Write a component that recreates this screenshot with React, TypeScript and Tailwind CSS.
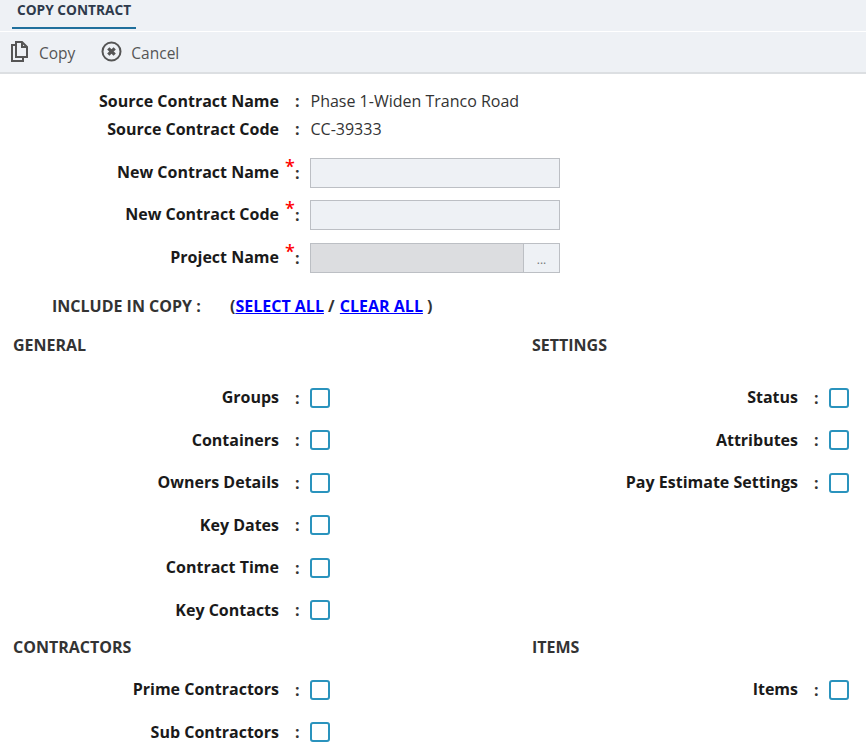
import React from "react";

const Colon = () => <span className="w-[31px] pl-[16px] font-bold text-[#333]">:</span>;

const Req = () => (
  <span className="w-[31px] relative font-bold text-[#333]">
    <span className="absolute left-[6px] -top-[6px] text-[#f00] text-[18px] leading-[20px] font-semibold">*</span>
    <span className="pl-[16px]">:</span>
  </span>
);

const CheckRow = ({ label }: { label: string }) => (
  <div className="flex items-center h-[42.5px]">
    <span className="w-[279px] -mt-[1.5px] text-right font-bold text-[#1a1a1a]">{label}</span>
    <Colon />
    <span className="w-5 h-5 border-2 border-[#2a93bd] rounded-[3px] bg-white" />
  </div>
);

const Section = ({ title }: { title: string }) => (
  <div className="pl-[13px] font-bold text-[#333] uppercase h-[20px] leading-[20px]">{title}</div>
);

export default function App() {
  const general = ["Groups", "Containers", "Owners Details", "Key Dates", "Contract Time", "Key Contacts"];
  const settings = ["Status", "Attributes", "Pay Estimate Settings"];

  return (
    <div className="w-[866px] h-[751px] overflow-hidden bg-white text-[16px] leading-[22px]" style={{ fontFamily: '"Open Sans", sans-serif' }}>
      <div className="h-[32px] bg-[#eef1f5] border-b border-white">
        <div className="inline-block align-top ml-[12px] pl-[5px] w-[124px] h-[29px] pt-[2px] border-b-2 border-[#1f6f9c] text-[13.7px] leading-[16px] font-bold text-[#2e3a4c] whitespace-nowrap">
          COPY CONTRACT
        </div>
      </div>
      <div className="h-[42px] bg-[#eef1f5] border-b-2 border-[#dcdfe2] flex items-center text-[#555] text-[15.5px]">
        <svg className="ml-[11px] -mt-[1px]" width="17" height="21" viewBox="0 0 17 21" fill="none" stroke="#555" strokeWidth="2">
          <path d="M5 1h6l5 5v10H5z" />
          <path d="M11 1v5h5" />
          <path d="M5 4H1v16h11v-4" />
        </svg>
        <span className="ml-[11px] mt-[2px]">Copy</span>
        <svg className="ml-[26px] -mt-[1px]" width="21" height="21" viewBox="0 0 21 21" fill="none">
          <circle cx="10.5" cy="10.5" r="9" stroke="#555" strokeWidth="2" />
          <path d="M7.3 7.3l6.4 6.4M13.7 7.3l-6.4 6.4" stroke="#555" strokeWidth="3.2" />
        </svg>
        <span className="ml-[9px] mt-[2px]">Cancel</span>
      </div>

      <div className="flex items-center h-[28px] mt-[13px]">
        <span className="w-[279px] text-right font-bold text-[#1a1a1a]">Source Contract Name</span>
        <Colon />
        <span className="ml-[0.5px] text-[#333]">Phase 1-Widen Tranco Road</span>
      </div>
      <div className="flex items-center h-[28px]">
        <span className="w-[279px] text-right font-bold text-[#1a1a1a]">Source Contract Code</span>
        <Colon />
        <span className="ml-[0.5px] text-[#333]">CC-39333</span>
      </div>

      <div className="flex items-center h-[30px] mt-[15px]">
        <span className="w-[279px] -mt-[2px] text-right font-bold text-[#1a1a1a]">New Contract Name</span>
        <Req />
        <div className="w-[250px] h-[30px] bg-[#eef1f5] border border-[#bcbfc4]" />
      </div>
      <div className="flex items-center h-[30px] mt-[12px]">
        <span className="w-[279px] -mt-[2px] text-right font-bold text-[#1a1a1a]">New Contract Code</span>
        <Req />
        <div className="w-[250px] h-[30px] bg-[#eef1f5] border border-[#bcbfc4]" />
      </div>
      <div className="flex items-center h-[30px] mt-[13px]">
        <span className="w-[279px] -mt-[2px] text-right font-bold text-[#1a1a1a]">Project Name</span>
        <Req />
        <div className="flex w-[250px] h-[30px] border border-[#bcbfc4]">
          <div className="w-[213px] bg-[#dcdde0] border-r border-[#bcbfc4]" />
          <div className="flex-1 bg-[#eef1f5] text-center text-[12px] leading-[32px] text-[#777]">...</div>
        </div>
      </div>

      <div className="flex h-[22px] mt-[22px] font-bold text-[#333]">
        <span className="ml-[52px] w-[178px]">INCLUDE IN COPY :</span>
        <span>
          (<a className="text-[#00f] underline font-bold" href="#">SELECT ALL</a> /{" "}
          <a className="ml-[1px] text-[#00f] underline font-bold" href="#">CLEAR ALL</a> )
        </span>
      </div>

      <div className="flex mt-[18px]">
        <div className="w-[519px] shrink-0">
          <Section title="General" />
          <div className="mt-[21.5px]">
            {general.map((g) => (
              <CheckRow key={g} label={g} />
            ))}
          </div>
        </div>
        <div className="flex-1">
          <Section title="Settings" />
          <div className="mt-[21.5px]">
            {settings.map((s) => (
              <CheckRow key={s} label={s} />
            ))}
          </div>
        </div>
      </div>

      <div className="flex mt-[5.5px]">
        <div className="w-[519px] shrink-0">
          <Section title="Contractors" />
          <div className="mt-[11.5px]">
            <CheckRow label="Prime Contractors" />
            <CheckRow label="Sub Contractors" />
          </div>
        </div>
        <div className="flex-1">
          <Section title="Items" />
          <div className="mt-[11.5px]">
            <CheckRow label="Items" />
          </div>
        </div>
      </div>
    </div>
  );
}
